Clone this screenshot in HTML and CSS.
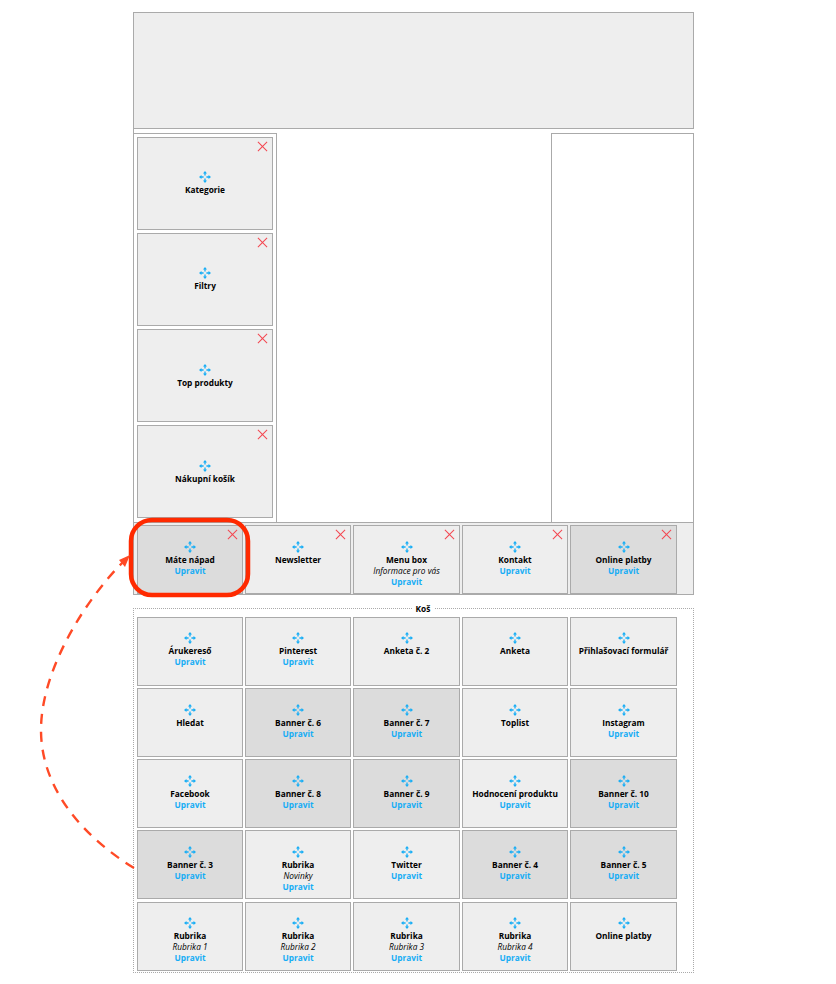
FILE: index.html
```html
<!DOCTYPE html>
<html lang="en">
<head>
    <title>Rozvržení stránky</title>
    <meta http-equiv="content-type" content="text/html;charset=UTF-8" />
    <link rel="stylesheet" href="styles.css">
</head>
<body>
    <svg width="0" height="0" class="defs">
        <symbol id="move" viewBox="0 0 12 12">
            <path d="M6 0 8 2.500H4zM6 12 4 9.500h4zM0 6 2.500 4v4zM12 6 9.500 8V4z" fill="#16adf5"/>
            <path d="M6 2v2.600M6 7.400V10M2 6h2.600M7.400 6H10" stroke="#16adf5" stroke-width="1.300"/>
        </symbol>
    </svg>

    <div class="page">
        <div class="layout">
            <div class="header"></div>
            <div class="columns">
                <div class="col col-left">
                    <div class="box tall">
                        <span class="close"></span>
                        <svg class="move"><use href="#move"/></svg>
                        <div class="name">Kategorie</div>
                    </div>
                    <div class="box tall">
                        <span class="close"></span>
                        <svg class="move"><use href="#move"/></svg>
                        <div class="name">Filtry</div>
                    </div>
                    <div class="box tall lower">
                        <span class="close"></span>
                        <svg class="move"><use href="#move"/></svg>
                        <div class="name">Top produkty</div>
                    </div>
                    <div class="box tall lower">
                        <span class="close"></span>
                        <svg class="move"><use href="#move"/></svg>
                        <div class="name">Nákupní košík</div>
                    </div>
                </div>
                <div class="col col-right"></div>
            </div>
            <div class="footer">
                <div class="box dark">
                    <span class="close"></span>
                    <svg class="move"><use href="#move"/></svg>
                    <div class="name">Máte nápad</div>
                    <a class="edit">Upravit</a>
                </div>
                <div class="box">
                    <span class="close"></span>
                    <svg class="move"><use href="#move"/></svg>
                    <div class="name">Newsletter</div>
                </div>
                <div class="box">
                    <span class="close"></span>
                    <svg class="move"><use href="#move"/></svg>
                    <div class="name">Menu box</div>
                    <div class="sub">Informace pro vás</div>
                    <a class="edit">Upravit</a>
                </div>
                <div class="box">
                    <span class="close"></span>
                    <svg class="move"><use href="#move"/></svg>
                    <div class="name">Kontakt</div>
                    <a class="edit">Upravit</a>
                </div>
                <div class="box dark">
                    <span class="close"></span>
                    <svg class="move"><use href="#move"/></svg>
                    <div class="name">Online platby</div>
                    <a class="edit">Upravit</a>
                </div>
            </div>
        </div>

        <div class="bin">
            <div class="bin-title">Koš</div>
            <div class="box"><svg class="move"><use href="#move"/></svg><div class="name">Árukereső</div><a class="edit">Upravit</a></div>
            <div class="box"><svg class="move"><use href="#move"/></svg><div class="name">Pinterest</div><a class="edit">Upravit</a></div>
            <div class="box"><svg class="move"><use href="#move"/></svg><div class="name">Anketa č. 2</div></div>
            <div class="box"><svg class="move"><use href="#move"/></svg><div class="name">Anketa</div></div>
            <div class="box"><svg class="move"><use href="#move"/></svg><div class="name">Přihlašovací formulář</div></div>

            <div class="box"><svg class="move"><use href="#move"/></svg><div class="name">Hledat</div></div>
            <div class="box dark"><svg class="move"><use href="#move"/></svg><div class="name">Banner č. 6</div><a class="edit">Upravit</a></div>
            <div class="box dark"><svg class="move"><use href="#move"/></svg><div class="name">Banner č. 7</div><a class="edit">Upravit</a></div>
            <div class="box"><svg class="move"><use href="#move"/></svg><div class="name">Toplist</div></div>
            <div class="box"><svg class="move"><use href="#move"/></svg><div class="name">Instagram</div><a class="edit">Upravit</a></div>

            <div class="box"><svg class="move"><use href="#move"/></svg><div class="name">Facebook</div><a class="edit">Upravit</a></div>
            <div class="box dark"><svg class="move"><use href="#move"/></svg><div class="name">Banner č. 8</div><a class="edit">Upravit</a></div>
            <div class="box dark"><svg class="move"><use href="#move"/></svg><div class="name">Banner č. 9</div><a class="edit">Upravit</a></div>
            <div class="box"><svg class="move"><use href="#move"/></svg><div class="name">Hodnocení produktu</div><a class="edit">Upravit</a></div>
            <div class="box dark"><svg class="move"><use href="#move"/></svg><div class="name">Banner č. 10</div><a class="edit">Upravit</a></div>

            <div class="box dark"><svg class="move"><use href="#move"/></svg><div class="name">Banner č. 3</div><a class="edit">Upravit</a></div>
            <div class="box"><svg class="move"><use href="#move"/></svg><div class="name">Rubrika</div><div class="sub">Novinky</div><a class="edit">Upravit</a></div>
            <div class="box"><svg class="move"><use href="#move"/></svg><div class="name">Twitter</div><a class="edit">Upravit</a></div>
            <div class="box dark"><svg class="move"><use href="#move"/></svg><div class="name">Banner č. 4</div><a class="edit">Upravit</a></div>
            <div class="box dark"><svg class="move"><use href="#move"/></svg><div class="name">Banner č. 5</div><a class="edit">Upravit</a></div>

            <div class="box"><svg class="move"><use href="#move"/></svg><div class="name">Rubrika</div><div class="sub">Rubrika 1</div><a class="edit">Upravit</a></div>
            <div class="box"><svg class="move"><use href="#move"/></svg><div class="name">Rubrika</div><div class="sub">Rubrika 2</div><a class="edit">Upravit</a></div>
            <div class="box"><svg class="move"><use href="#move"/></svg><div class="name">Rubrika</div><div class="sub">Rubrika 3</div><a class="edit">Upravit</a></div>
            <div class="box"><svg class="move"><use href="#move"/></svg><div class="name">Rubrika</div><div class="sub">Rubrika 4</div><a class="edit">Upravit</a></div>
            <div class="box"><svg class="move"><use href="#move"/></svg><div class="name">Online platby</div></div>
        </div>
    </div>

    <svg class="annotation" width="836" height="984" viewBox="0 0 836 984">
        <rect x="131" y="520" width="117" height="75" rx="21" fill="none" stroke="#ff2a00" stroke-width="4.500"/>
        <path d="M134 868C85 838 41 790 41 730C41 670 85 600 124 561" fill="none" stroke="#ff4a26" stroke-width="2.400" stroke-dasharray="10 8"/>
        <path d="M130 555 125 567 119 560z" fill="#ff4a26"/>
    </svg>
</body>
</html>
```

FILE: styles.css
```css
body {
    margin: 0;
    background: #fff;
    font-family: "Open Sans", sans-serif;
    font-size: 8.3px;
    line-height: 11px;
    color: #000;
}

.defs {
    position: absolute;
}

.page {
    width: 561px;
    margin-left: 133px;
    padding-top: 12px;
}

.layout {
    border-left: 1px solid #aaa;
}

.header {
    height: 115px;
    background: #eee;
    border: 1px solid #aaa;
    border-left: 0;
}

.columns {
    display: flex;
    justify-content: space-between;
    height: 393px;
    padding-top: 4px;
    box-sizing: border-box;
}

.col {
    border: 1px solid #aaa;
    border-bottom: 0;
    box-sizing: border-box;
}

.col-left {
    width: 144px;
    margin-left: -1px;
    padding: 3px 3px 0 3px;
    display: flex;
    flex-direction: column;
    gap: 3px;
}

.col-right {
    width: 143px;
}

.footer, .bin {
    display: grid;
    grid-template-columns: 106px 106px 107px 106px 107px;
    gap: 2px;
    box-sizing: border-box;
}

.footer {
    height: 73px;
    padding: 2px 0 0 3px;
    background: #eee;
    border: 1px solid #aaa;
    border-left: 0;
}

.box {
    position: relative;
    height: 69px;
    padding-top: 15px;
    box-sizing: border-box;
    background: #eee;
    border: 1px solid #aaa;
    text-align: center;
}

.box.tall {
    width: 136px;
    height: 93px;
    padding-top: 33px;
}

.box.lower {
    padding-top: 34px;
}

.box.dark {
    background: #dcdcdc;
}

.move {
    display: block;
    width: 12px;
    height: 12px;
    margin: 0 auto 1px;
}

.close {
    position: absolute;
    top: 3px;
    right: 5px;
    width: 10px;
    height: 10px;
}

.close::before, .close::after {
    content: "";
    position: absolute;
    top: 4.500px;
    left: -1.500px;
    width: 13px;
    height: 1px;
    background: #f4454f;
    transform: rotate(45deg);
}

.close::after {
    transform: rotate(-45deg);
}

.name {
    font-weight: 700;
    white-space: nowrap;
}

.sub {
    font-style: italic;
}

.edit {
    display: block;
    font-weight: 700;
    color: #16adf5;
}

.bin {
    position: relative;
    align-content: start;
    height: 365px;
    margin-top: 13px;
    padding: 8px 0 0 3px;
    border: 1px dotted #aaa;
}

/* first and last rows sit a pixel higher */
.bin .box:nth-child(-n+6), .bin .box:nth-child(n+22) {
    padding-top: 14px;
}

.bin .box:nth-child(n+22) {
    margin-top: 1px;
}

.bin-title {
    position: absolute;
    top: -6px;
    left: 278px;
    width: 22px;
    background: #fff;
    font-weight: 700;
    text-align: center;
}

.annotation {
    position: absolute;
    top: 0;
    left: 0;
    pointer-events: none;
}
```
